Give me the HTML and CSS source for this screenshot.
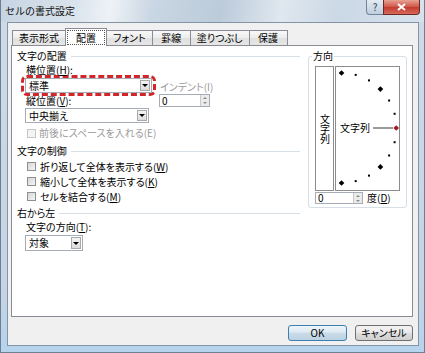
FILE: index.html
```html
<!DOCTYPE html>
<html lang="ja">
<head>
    <meta charset="UTF-8">
    <meta name="viewport" content="width=device-width, initial-scale=1.0">
    <title>セルの書式設定</title>
    <link rel="stylesheet" href="styles.css">
</head>
<body>
<div class="window">
    <div class="titlebar">
        <span class="title">セルの書式設定</span>
        <span class="help-btn">?</span>
        <span class="close-btn">
            <svg width="9" height="8" viewBox="0 0 9 8"><path d="M1 1L8 7M8 1L1 7" stroke="#fff" stroke-width="2"/></svg>
        </span>
    </div>
    <div class="frame">
        <div class="client">
            <div class="tabs">
                <div class="tab">表示形式</div>
                <div class="tab active"><span class="focus">配置</span></div>
                <div class="tab">フォント</div>
                <div class="tab">罫線</div>
                <div class="tab">塗りつぶし</div>
                <div class="tab">保護</div>
            </div>

            <div class="panel">
                <div class="col-left">
                    <div class="group-head"><span>文字の配置</span></div>
                    <div class="align-block">
                        <div class="align-main">
                            <div class="label">横位置(<u>H</u>):</div>
                            <div class="highlight">
                                <div class="combo wide">
                                    <span class="combo-text">標準</span>
                                    <span class="combo-arrow"></span>
                                </div>
                            </div>
                            <div class="label second">縦位置(<u>V</u>):</div>
                            <div class="combo middle">
                                <span class="combo-text">中央揃え</span>
                                <span class="combo-arrow"></span>
                            </div>
                        </div>
                        <div class="indent">
                            <div class="label disabled">インデント(I)</div>
                            <div class="spin">
                                <span class="spin-value">0</span>
                                <span class="spin-arrows"><i class="up"></i><i class="down"></i></span>
                            </div>
                        </div>
                    </div>
                    <div class="check disabled"><span class="box"></span>前後にスペースを入れる(E)</div>

                    <div class="group-head control"><span>文字の制御</span></div>
                    <div class="checks">
                        <div class="check"><span class="box"></span>折り返して全体を表示する(<u>W</u>)</div>
                        <div class="check"><span class="box"></span>縮小して全体を表示する(<u>K</u>)</div>
                        <div class="check"><span class="box"></span>セルを結合する(<u>M</u>)</div>
                    </div>

                    <div class="group-head rtl"><span>右から左</span></div>
                    <div class="label direction-label">文字の方向(<u>T</u>):</div>
                    <div class="combo small">
                        <span class="combo-text">対象</span>
                        <span class="combo-arrow"></span>
                    </div>
                </div>

                <fieldset class="direction">
                    <legend>方向</legend>
                    <div class="orient">
                        <div class="vbox"><span>文字列</span></div>
                        <div class="dial">
                            <svg width="63" height="123" viewBox="0 0 63 123">
                                <g fill="#000">
                                    <rect x="-2" y="-2" width="4" height="4" transform="translate(5.5 6) rotate(45)"/>
                                    <rect x="18.7" y="6.9" width="2" height="2"/>
                                    <rect x="32" y="12.4" width="2" height="2"/>
                                    <rect x="-2" y="-2" width="4" height="4" transform="translate(44.4 22.1) rotate(45)"/>
                                    <rect x="52.1" y="32.5" width="2" height="2"/>
                                    <rect x="57.6" y="45.8" width="2" height="2"/>
                                    <rect x="57.6" y="74.2" width="2" height="2"/>
                                    <rect x="52.1" y="87.5" width="2" height="2"/>
                                    <rect x="-2" y="-2" width="4" height="4" transform="translate(44.4 99.9) rotate(45)"/>
                                    <rect x="32" y="107.6" width="2" height="2"/>
                                    <rect x="18.7" y="113.1" width="2" height="2"/>
                                    <rect x="-2" y="-2" width="4" height="4" transform="translate(5.5 116) rotate(45)"/>
                                </g>
                                <text class="dial-text" x="4" y="65">文字列</text>
                                <line x1="37" y1="61" x2="57" y2="61" stroke="#7a7a7a" stroke-width="1.5"/>
                                <rect x="-2" y="-2" width="4" height="4" fill="#9c2020" transform="translate(60.2 61) rotate(45)"/>
                            </svg>
                        </div>
                    </div>
                    <div class="degree">
                        <div class="spin">
                            <span class="spin-value">0</span>
                            <span class="spin-arrows"><i class="up"></i><i class="down"></i></span>
                        </div>
                        <span class="degree-label">度(<u>D</u>)</span>
                    </div>
                </fieldset>
            </div>

            <div class="buttons">
                <button class="btn default">OK</button>
                <button class="btn">キャンセル</button>
            </div>
        </div>
    </div>
</div>
</body>
</html>
```

FILE: styles.css
```css
* {
    box-sizing: border-box;
}
body {
    margin: 0;
    background: #fff;
    font-family: "Noto Sans CJK JP", "Liberation Sans", sans-serif;
    font-size: 10px;
    line-height: 12px;
    color: #000;
    font-feature-settings: "palt";
}
u {
    text-decoration-thickness: 1px;
    text-underline-offset: 1px;
}

/* window frame */
.window {
    width: 425px;
    height: 353px;
    display: flex;
    flex-direction: column;
    border: 1px solid #6d7f92;
    border-top: none;
    background: linear-gradient(to bottom, #cfdbe7, #c4d4e4 85%, #b6d3ee);
}
.titlebar {
    height: 22px;
    display: flex;
    align-items: flex-start;
    padding: 0 4px;
    background: linear-gradient(100deg, #c6d4e2 0%, #dbe4ed 18%, #eef2f6 26%, #c9d6e3 36%, #bccbda 52%, #dfe7ef 66%, #cbd8e5 80%, #d8e2ec 100%);
}
.title {
    margin-top: 5px;
    font-feature-settings: normal;
    color: #111;
}
.help-btn {
    margin-left: auto;
    width: 17px;
    height: 15px;
    border: 1px solid #71849a;
    border-top: none;
    border-right: none;
    border-radius: 0 0 0 4px;
    background: linear-gradient(#e3ebf3, #bfcedd);
    text-align: center;
    line-height: 14px;
    color: #2d3d4f;
}
.close-btn {
    width: 37px;
    height: 15px;
    border: 1px solid #6b2a23;
    border-top: none;
    border-radius: 0 0 4px 0;
    background: linear-gradient(#e7a194, #cf5547 50%, #c23a2e 51%, #d8695a);
    display: flex;
    align-items: center;
    justify-content: center;
}
.frame {
    flex: 1;
    display: flex;
    padding: 0 5px 6px 6px;
}
.client {
    flex: 1;
    display: flex;
    flex-direction: column;
    background: #f0f0f0;
    border: 1px solid #8394a7;
}

/* tabs */
.tabs {
    display: flex;
    align-items: flex-end;
    height: 17px;
    margin: 5px 0 0 4px;
}
.tab {
    height: 15px;
    min-width: 39px;
    padding: 0 6px;
    margin-right: -1px;
    border: 1px solid #898c95;
    border-bottom: none;
    background: linear-gradient(#f8f8f8, #ececec 50%, #e0e0e0 51%, #e6e6e6);
    text-align: center;
    line-height: 13px;
}
.tab.active {
    height: 18px;
    margin-bottom: -1px;
    padding: 1px 1px 0;
    background: #fff;
    position: relative;
    z-index: 1;
}
.focus {
    display: block;
    padding: 0 8px;
    border: 1px dotted #555;
    line-height: 13px;
}
.panel {
    height: 272px;
    margin: 0 5px 0 3px;
    padding: 4px 0 0 5px;
    display: flex;
    align-items: flex-start;
    background: #fff;
    border: 1px solid #898c95;
}

/* left column */
.col-left {
    width: 283px;
}
.group-head {
    display: flex;
    align-items: center;
    height: 12px;
}
.group-head::after {
    content: "";
    flex: 1;
    margin-left: 4px;
    border-top: 1px solid #d5dfe5;
}
.group-head.control {
    margin-top: 6px;
}
.group-head.rtl {
    margin-top: 3px;
}
.align-block {
    display: flex;
    margin: 2px 0 0 8px;
}
.align-main {
    width: 127px;
}
.label {
    height: 12px;
    padding-left: 1px;
    white-space: nowrap;
}
.label.second {
    margin-top: 2px;
}
.label.disabled {
    color: #9a9a9a;
}
.highlight {
    margin: -1px -4px -3px;
    padding: 0 1px;
    border: 3px dashed #d2262a;
    border-radius: 6px;
}
.combo {
    display: flex;
    height: 15px;
    padding: 1px;
    border: 1px solid #a5acb5;
    background: #fff;
}
.combo.middle {
    width: 124px;
    margin-top: 1px;
}
.combo.small {
    width: 58px;
    height: 16px;
    margin: 2px 0 0 8px;
}
.combo-text {
    flex: 1;
    padding-left: 2px;
    line-height: 11px;
}
.combo-arrow {
    width: 10px;
    display: flex;
    align-items: center;
    justify-content: center;
    border: 1px solid #a9a9a9;
    background: linear-gradient(#f4f4f4, #dcdcdc);
}
.combo-arrow::before {
    content: "";
    border-left: 3px solid transparent;
    border-right: 3px solid transparent;
    border-top: 3px solid #000;
}
.indent {
    margin-left: 7px;
    padding-top: 17px;
}
.spin {
    display: flex;
    width: 51px;
    height: 13px;
    margin-top: 1px;
    border: 1px solid #a5acb5;
    background: #fff;
}
.spin-value {
    flex: 1;
    padding-left: 2px;
    line-height: 11px;
}
.spin-arrows {
    width: 9px;
    display: flex;
    flex-direction: column;
    background: #eaeaea;
    border-left: 1px solid #c8c8c8;
}
.spin-arrows i {
    flex: 1;
    display: flex;
    align-items: center;
    justify-content: center;
}
.spin-arrows .up::before {
    content: "";
    border-left: 2px solid transparent;
    border-right: 2px solid transparent;
    border-bottom: 2px solid #8a8a8a;
}
.spin-arrows .down::before {
    content: "";
    border-left: 2px solid transparent;
    border-right: 2px solid transparent;
    border-top: 2px solid #8a8a8a;
}
.check {
    display: flex;
    align-items: center;
    height: 15px;
    padding-left: 10px;
    white-space: nowrap;
}
.check .box {
    width: 9px;
    height: 9px;
    margin-right: 4px;
    border: 1px solid #8f8f8f;
    background: linear-gradient(135deg, #d6d6d6, #f6f6f6);
}
.check.disabled {
    height: 12px;
    margin-top: 4px;
    color: #9a9a9a;
}
.check.disabled .box {
    margin-right: 3px;
    border-color: #c6c6c6;
    background: #f4f4f4;
}
.checks {
    margin-top: 2px;
}
.direction-label {
    margin-top: 2px;
    padding-left: 9px;
}

/* orientation box */
.direction {
    width: 99px;
    margin: 0 0 0 8px;
    padding: 0 6px 3px;
    border: 1px solid #d5dfe5;
    border-radius: 3px;
    min-inline-size: 0;
}
.direction legend {
    margin-left: -3px;
    padding: 0 1px;
    line-height: 12px;
}
.orient {
    display: flex;
    gap: 1px;
    height: 125px;
    margin-top: 4px;
}
.vbox {
    width: 19px;
    display: flex;
    align-items: center;
    justify-content: center;
    border: 1px solid #8c8c8c;
}
.vbox span {
    writing-mode: vertical-rl;
    text-orientation: upright;
    font-feature-settings: normal;
    line-height: 12px;
}
.dial {
    width: 65px;
    border: 1px solid #8c8c8c;
}
.dial svg {
    display: block;
}
.dial-text {
    font-family: "Noto Sans CJK JP", sans-serif;
    font-size: 10px;
}
.degree {
    display: flex;
    align-items: center;
    height: 12px;
    margin-top: 1px;
}
.degree .spin {
    width: 48px;
    height: 12px;
    margin-top: 0;
}
.degree .spin-value {
    line-height: 10px;
}
.degree-label {
    margin-left: 4px;
}

/* dialog buttons */
.buttons {
    display: flex;
    justify-content: flex-end;
    gap: 8px;
    margin-top: 8px;
    padding-right: 5px;
}
.btn {
    width: 58px;
    height: 16px;
    padding: 0;
    border: 1px solid #707070;
    border-radius: 3px;
    background: linear-gradient(#f2f2f2, #ebebeb 45%, #dddddd 50%, #cfcfcf);
    font: inherit;
    line-height: 14px;
    color: #000;
}
.btn.default {
    width: 59px;
    border-color: #3c7fb1;
    background: linear-gradient(#eef5fa, #dde9f2 45%, #c9dbe8 50%, #bcd2e2);
}
```
